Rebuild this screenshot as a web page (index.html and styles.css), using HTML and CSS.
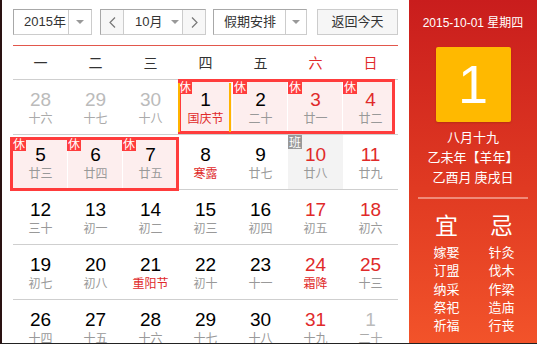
FILE: index.html
```html
<!DOCTYPE html>
<html lang="zh-CN">
<head>
<meta charset="utf-8">
<link rel="stylesheet" href="styles.css">
</head>
<body>
<div class="page">
  <main class="main">
    <div class="toolbar">
      <div class="select year">
        <span class="sel-text">2015年</span>
        <span class="sel-arrow"><i class="tri"></i></span>
      </div>
      <div class="month-group">
        <span class="nav"><svg width="7" height="11" viewBox="0 0 7 11"><polyline points="6,0.5 1,5.5 6,10.5" fill="none" stroke="#777" stroke-width="1.2"/></svg></span>
        <span class="month"><span>10月</span><i class="tri"></i></span>
        <span class="nav"><svg width="7" height="11" viewBox="0 0 7 11"><polyline points="1,0.5 6,5.5 1,10.5" fill="none" stroke="#777" stroke-width="1.2"/></svg></span>
      </div>
      <div class="select holiday">
        <span class="sel-text">假期安排</span>
        <span class="sel-arrow"><i class="tri"></i></span>
      </div>
      <div class="today-btn">返回今天</div>
    </div>

    <div class="cal">
      <div class="week-head">
        <span>一</span><span>二</span><span>三</span><span>四</span><span>五</span><span class="we">六</span><span class="we">日</span>
      </div>
      <div class="days">
        <div class="cell other"><b>28</b><em>十六</em></div>
        <div class="cell other"><b>29</b><em>十七</em></div>
        <div class="cell other"><b>30</b><em>十八</em></div>
        <div class="cell hol today"><i class="badge">休</i><b>1</b><em class="fest">国庆节</em></div>
        <div class="cell hol"><i class="badge">休</i><b>2</b><em>二十</em></div>
        <div class="cell hol"><i class="badge">休</i><b class="red">3</b><em>廿一</em></div>
        <div class="cell hol last"><i class="badge">休</i><b class="red">4</b><em>廿二</em></div>

        <div class="cell hol r2"><i class="badge">休</i><b>5</b><em>廿三</em></div>
        <div class="cell hol r2"><i class="badge">休</i><b>6</b><em>廿四</em></div>
        <div class="cell hol r2"><i class="badge">休</i><b>7</b><em>廿五</em></div>
        <div class="cell"><b>8</b><em class="fest">寒露</em></div>
        <div class="cell"><b>9</b><em>廿七</em></div>
        <div class="cell work"><i class="badge gray">班</i><b class="red">10</b><em>廿八</em></div>
        <div class="cell"><b class="red">11</b><em>廿九</em></div>

        <div class="cell"><b>12</b><em>三十</em></div>
        <div class="cell"><b>13</b><em>初一</em></div>
        <div class="cell"><b>14</b><em>初二</em></div>
        <div class="cell"><b>15</b><em>初三</em></div>
        <div class="cell"><b>16</b><em>初四</em></div>
        <div class="cell"><b class="red">17</b><em>初五</em></div>
        <div class="cell"><b class="red">18</b><em>初六</em></div>

        <div class="cell"><b>19</b><em>初七</em></div>
        <div class="cell"><b>20</b><em>初八</em></div>
        <div class="cell"><b>21</b><em class="fest">重阳节</em></div>
        <div class="cell"><b>22</b><em>初十</em></div>
        <div class="cell"><b>23</b><em>十一</em></div>
        <div class="cell"><b class="red">24</b><em class="fest">霜降</em></div>
        <div class="cell"><b class="red">25</b><em>十三</em></div>

        <div class="cell"><b>26</b><em>十四</em></div>
        <div class="cell"><b>27</b><em>十五</em></div>
        <div class="cell"><b>28</b><em>十六</em></div>
        <div class="cell"><b>29</b><em>十七</em></div>
        <div class="cell"><b>30</b><em>十八</em></div>
        <div class="cell"><b class="red">31</b><em>十九</em></div>
        <div class="cell other"><b>1</b><em>二十</em></div>
      </div>
      <div class="hol-box box-a"></div>
      <div class="hol-box box-b"></div>
    </div>
  </main>

  <aside class="panel">
    <div class="p-date">2015-10-01 星期四</div>
    <div class="p-big">1</div>
    <div class="p-lunar">
      <div>八月十九</div>
      <div>乙未年【羊年】</div>
      <div>乙酉月 庚戌日</div>
    </div>
    <div class="p-sep"></div>
    <div class="yiji">
      <div class="yj-col">
        <div class="yj-title">宜</div>
        <div>嫁娶</div><div>订盟</div><div>纳采</div><div>祭祀</div><div>祈福</div>
      </div>
      <div class="yj-col">
        <div class="yj-title">忌</div>
        <div>针灸</div><div>伐木</div><div>作梁</div><div>造庙</div><div>行丧</div>
      </div>
    </div>
  </aside>
</div>
</body>
</html>
```

FILE: styles.css
```css
* { box-sizing: border-box; margin: 0; padding: 0; }
html, body { background: #fff; }
body {
  margin: 0;
  font-family: "Liberation Sans", "Noto Sans CJK SC", sans-serif;
  color: #333;
}
.page {
  width: 537px;
  height: 344px;
  overflow: hidden;
  display: flex;
  border-left: 2px solid #2a1212;
  border-bottom: 1px solid #222;
}
.main {
  width: 396px;
  padding-left: 11px;
  flex: none;
}

/* toolbar */
.toolbar {
  display: flex;
  padding-top: 9px;
  height: 45px;
}
.select, .month-group, .today-btn {
  height: 26px;
  border: 1px solid #ccc;
  display: flex;
  font-size: 13px;
  line-height: 24px;
  color: #333;
}
.select { border-color: #a8a8a8 #ccc #ccc #a8a8a8; }
.year { width: 80px; }
.year .sel-text { width: 54px; padding-left: 10px; }
.sel-arrow {
  flex: 1;
  border-left: 1px solid #ccc;
  display: flex;
  align-items: center;
  justify-content: center;
}
.tri {
  display: inline-block;
  width: 0; height: 0;
  border-left: 4px solid transparent;
  border-right: 4px solid transparent;
  border-top: 4px solid #999;
}
.month-group {
  width: 106px;
  margin-left: 8px;
  border-color: #a8a8a8 #ccc #ccc #a8a8a8;
}
.nav {
  width: 22px;
  background: #f7f7f7;
  display: flex;
  align-items: center;
  justify-content: center;
}
.month {
  width: 60px;
  border-left: 1px solid #ccc;
  border-right: 1px solid #ccc;
  display: flex;
  align-items: center;
  padding-left: 11px;
  gap: 8px;
}
.holiday { width: 95px; margin-left: 7px; }
.holiday .sel-text { width: 71px; padding-left: 10px; }
.today-btn {
  width: 82px;
  margin-left: 10px;
  background: #f6f6f6;
  justify-content: center;
}

/* calendar */
.cal {
  position: relative;
  z-index: 0;
  width: 385px;
  border-top: 1px solid #e2574c;
}
.week-head {
  display: grid;
  grid-template-columns: repeat(7, 55px);
  height: 34px;
  border-bottom: 1px solid #cfcfcf;
  font-family: "Noto Sans CJK SC", sans-serif;
  font-size: 14px;
  line-height: 32px;
  text-align: center;
  color: #333;
}
.week-head .we { color: #e02a2a; }
.days {
  display: grid;
  grid-template-columns: repeat(7, 55px);
}
.cell {
  position: relative;
  height: 55px;
  border-bottom: 1px solid #cfcfcf;
  text-align: center;
  padding-top: 10px;
}
.cell b {
  display: block;
  font-family: "Liberation Sans", sans-serif;
  font-weight: normal;
  font-size: 19px;
  line-height: 20px;
  color: #000;
}
.cell b.red { color: #e02a2a; }
.cell em {
  display: block;
  font-style: normal;
  font-family: "Noto Sans CJK SC", sans-serif;
  font-size: 12px;
  line-height: 16px;
  color: #999;
}
.cell em.fest { color: #e02a2a; }
.cell.other b { color: #bbb; }
.cell.other em { color: #aaa; }
.cell.hol {
  background: #fdeeee;
  box-shadow: inset -1px 0 #fff;
}
.cell.hol.last { box-shadow: inset -3px 0 #fff; }
.cell.hol.r2 { box-shadow: inset -1px 0 #fff, inset 0 2px #fff; }
.cell.work { background: #f3f3f3; }
.cell.today::after {
  content: "";
  position: absolute;
  left: 0;
  right: 2px;
  top: 3px;
  bottom: 2px;
  border-left: 2px solid #ffb400;
  border-right: 2px solid #ffb400;
  z-index: 4;
}
.cell.r2 .badge { top: 2px; left: -1px; }
.badge {
  position: absolute;
  top: 0;
  left: 0;
  width: 14px;
  height: 14px;
  background: #ff3c3c;
  color: #fff;
  font-style: normal;
  font-family: "Noto Sans CJK SC", sans-serif;
  font-size: 12px;
  line-height: 14px;
  text-align: center;
  z-index: 3;
}
.badge.gray { background: #999; }
.hol-box {
  position: absolute;
  border: 3px solid #ff3c3c;
  z-index: 2;
  pointer-events: none;
}
.box-a { left: 165px; top: 33px; width: 217px; height: 55px; }
.box-b { left: -3px; top: 91px; width: 169px; height: 54px; }

/* right panel */
.panel {
  width: 128px;
  margin-left: 11px;
  flex: none;
  background: linear-gradient(180deg, #c91d1d 0%, #e03a22 55%, #f2532a 100%);
  color: #fff;
  display: flex;
  flex-direction: column;
  align-items: center;
  padding-top: 16px;
  font-family: "Noto Sans CJK SC", sans-serif;
}
.p-date {
  font-family: "Liberation Sans", "Noto Sans CJK SC", sans-serif;
  font-size: 12px;
  line-height: 14px;
  white-space: nowrap;
}
.p-big {
  width: 75px;
  height: 75px;
  margin-top: 17px;
  background: #ffb900;
  border-radius: 2px;
  box-shadow: 0 1px 2px rgba(120, 40, 0, 0.35);
  font-family: "Liberation Sans", sans-serif;
  font-size: 54px;
  line-height: 75px;
  text-align: center;
}
.p-lunar {
  margin-top: 5px;
  font-size: 13px;
  line-height: 20px;
  text-align: center;
}
.p-sep {
  width: 110px;
  height: 2px;
  margin-top: 10px;
  background: #f08a78;
}
.yiji {
  display: grid;
  grid-template-columns: 55px 55px;
  margin-top: 11px;
  margin-left: 2px;
  font-size: 13px;
  line-height: 18.3px;
  text-align: center;
}
.yj-title {
  font-size: 23px;
  line-height: 28px;
  margin-bottom: 5px;
}
```
